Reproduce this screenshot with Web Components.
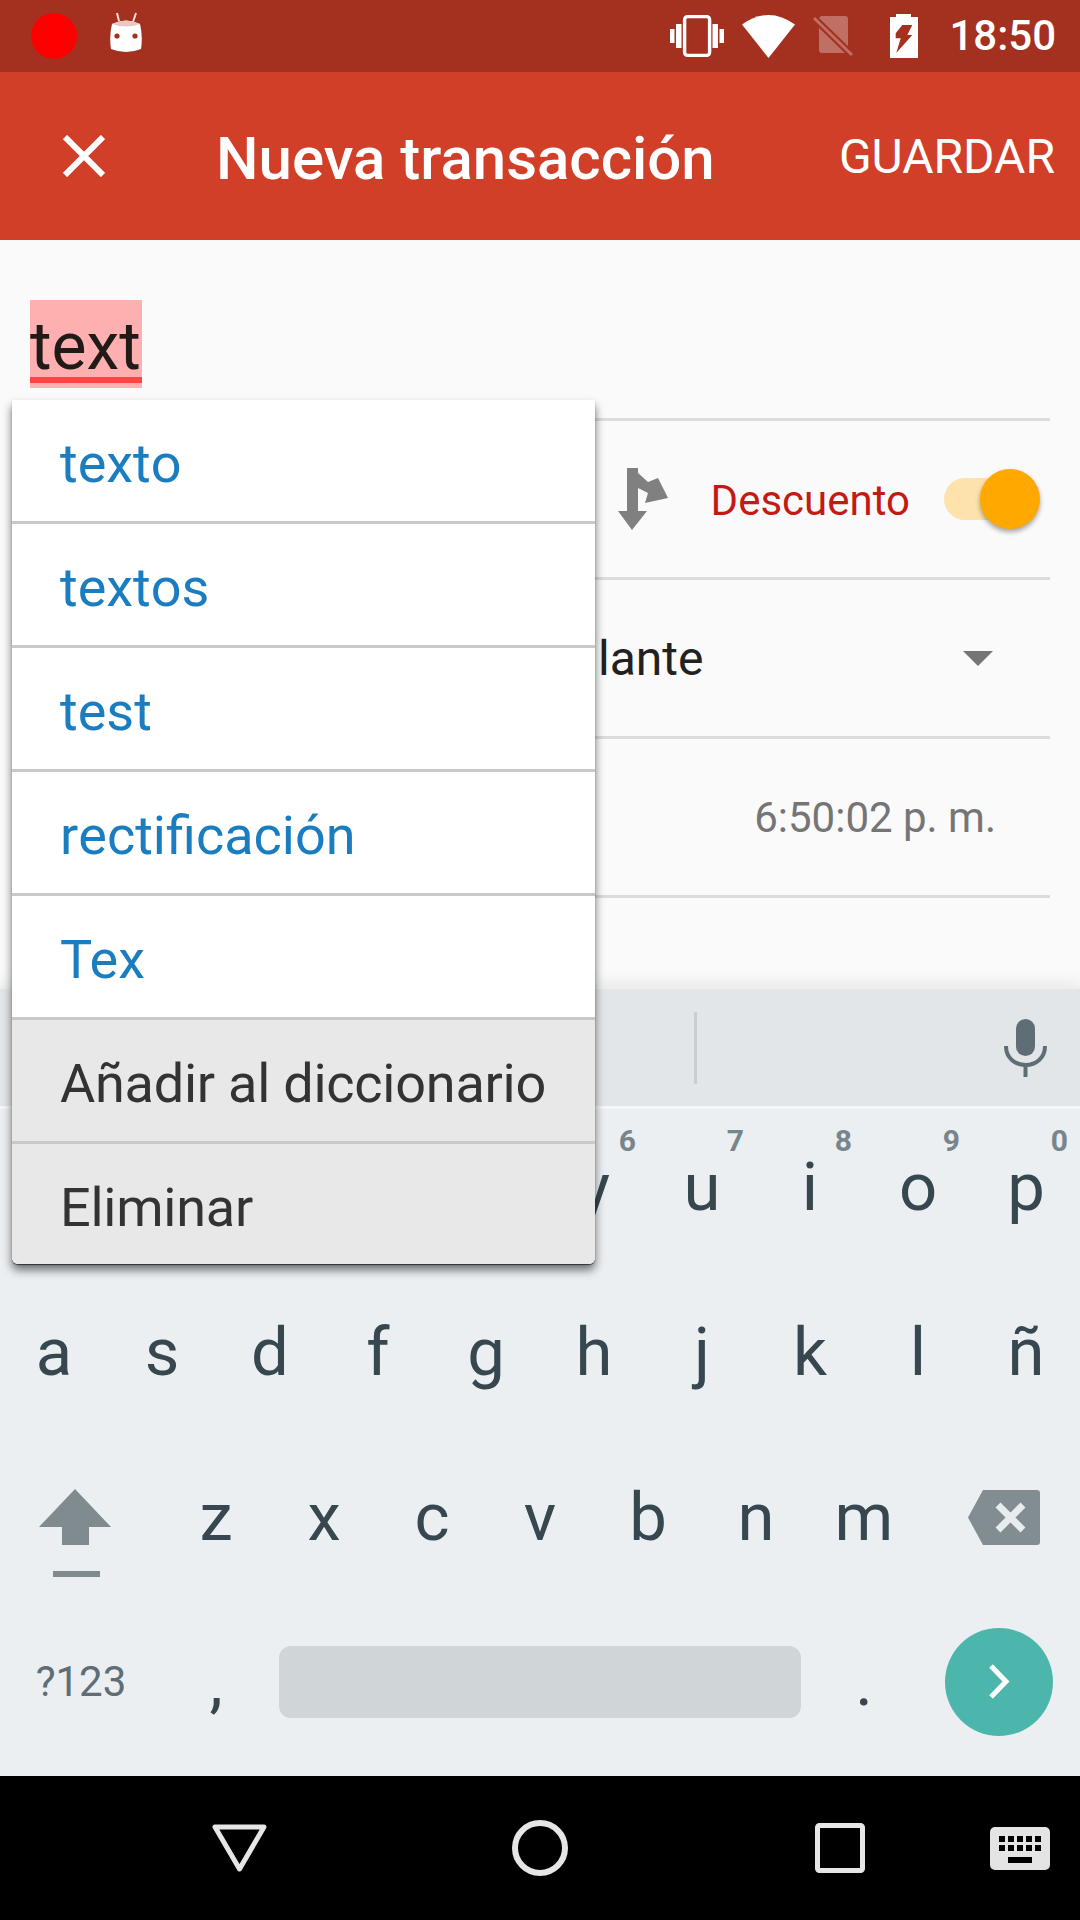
<!DOCTYPE html>
<html lang="es">
<head>
<meta charset="utf-8">
<title>Nueva transacción</title>
<style>
  html, body { margin: 0; padding: 0; background: #fafafa; }
  body { font-family: Roboto, "Liberation Sans", sans-serif; }
</style>
</head>
<body>
<app-screen>
  <status-bar></status-bar>
  <app-bar title="Nueva transacción" action="GUARDAR"></app-bar>
  <transaction-form></transaction-form>
  <spell-popup></spell-popup>
  <key-board></key-board>
  <nav-bar></nav-bar>
</app-screen>

<script>
(function () {
    function define(name, html) {
        customElements.define(name, class extends HTMLElement {
            constructor() {
                super();
                this.attachShadow({mode: "open"}).innerHTML = html;
            }
        });
    }

    define('app-screen', `
    <style>
      :host {
        display: flex;
        flex-direction: column;
        position: relative;
        width: 1080px;
        height: 1920px;
        overflow: hidden;
        background: #fafafa;
      }
    </style>
    <slot></slot>`);

    define('status-bar', `
    <style>
      :host {
        display: flex;
        align-items: center;
        flex: 0 0 72px;
        box-sizing: border-box;
        padding: 0 24px 0 31px;
        background: #a43120;
        color: #fff;
      }
      .dot { width: 46px; height: 46px; border-radius: 50%; background: #f00; margin-right: 32px; }
      .spacer { flex: 1; }
      svg { display: block; }
      .clock { font-size: 42px; font-weight: 500; margin-left: 31px; line-height: 72px; }
    </style>
    <div class="dot"></div>
    <svg width="34" height="41" viewBox="0 0 34 41" style="margin-top:-7px">
      <path d="M8 1l2 8M27 1l-3 9" stroke="#f4dcd8" stroke-width="2" fill="none"/>
      <path d="M3 12Q17 5 31 12Q34 24 32 37Q17 43 2 37Q0 24 3 12Z" fill="#fff"/>
      <path d="M3 12Q17 5 31 12Q17 17 3 12Z" fill="#e8c8c4"/>
      <circle cx="8" cy="24" r="2.6" fill="#a43120"/>
      <circle cx="26" cy="24" r="2.6" fill="#a43120"/>
    </svg>
    <div class="spacer"></div>
    <svg width="54" height="42" viewBox="0 0 54 42" style="margin-right:18px">
      <rect x="14.6" y="1.6" width="25" height="38.8" rx="3" fill="none" stroke="#fff" stroke-width="3.4"/>
      <path d="M0 14h4.5v14H0zM6 9h5.5v24H6zM42.500 9H48v24h-5.500zM49.500 14H54v14h-4.500z" fill="#fff"/>
    </svg>
    <svg width="53" height="43" viewBox="0 0 53 43" style="margin-right:18px">
      <path d="M26.500 43L0 9.500Q26.500 -9.500 53 9.500Z" fill="#fff"/>
    </svg>
    <svg width="40" height="41" viewBox="0 0 40 41" style="margin-right:36px">
      <path d="M8 0H32Q35 0 35 3V34Q35 37 32 37H9Q6 37 6 34V2Z" fill="#fff" fill-opacity=".3"/>
      <path d="M1 2L39 39" stroke="#a43120" stroke-width="7"/>
      <path d="M1 2L39 39" stroke="#fff" stroke-opacity=".3" stroke-width="3"/>
    </svg>
    <svg width="29" height="44" viewBox="0 0 29 44">
      <path d="M7 0H22V3H29V44H1V3H7Z" fill="#fff"/>
      <path d="M6.700 19.300L13.300 11H23.300L18.300 21H23.300L7.300 39L11.700 24.300H6.700Z" fill="#a43120"/>
    </svg>
    <span class="clock">18:50</span>`);

    customElements.define('app-bar', class extends HTMLElement {
        constructor() {
            super();
            this.attachShadow({mode: "open"}).innerHTML = `
            <style>
              :host {
                display: flex;
                align-items: center;
                flex: 0 0 168px;
                box-sizing: border-box;
                padding: 0 25px 0 63px;
                background: #d13f29;
                color: #fff;
              }
              svg { display: block; flex: none; margin-right: 111px; }
              .title { flex: 1; font-size: 60px; font-weight: 500; white-space: nowrap; padding-top: 4px; }
              .action { font-size: 48px; white-space: nowrap; }
            </style>
            <svg width="42" height="42" viewBox="0 0 42 42">
              <path d="M2 2L40 40M40 2L2 40" stroke="#fff" stroke-width="6"/>
            </svg>
            <span class="title"></span>
            <span class="action"></span>`;
            this.shadowRoot.querySelector('.title').textContent = this.getAttribute('title');
            this.shadowRoot.querySelector('.action').textContent = this.getAttribute('action');
        }
    });

    define('form-row', `
    <style>
      :host {
        display: flex;
        align-items: center;
        box-sizing: border-box;
        height: 159px;
        margin: 0 30px;
        border-bottom: 3px solid #dcdcdc;
      }
    </style>
    <slot></slot>`);

    define('transaction-form', `
    <style>
      :host {
        display: block;
        flex: 0 0 746px;
        color: #212121;
      }
      form-row.first { height: 181px; align-items: flex-start; padding-top: 60px; }
      .misspelled {
        display: inline-block;
        box-sizing: border-box;
        height: 88px;
        padding: 6px 1px 0 0;
        font-size: 66px;
        line-height: 82px;
        font-kerning: none;
        color: #201a19;
        background:
          linear-gradient(#ff4444, #ff4444) 0 77px / 100% 6px no-repeat,
          #feb0b0;
      }
      .transfer { justify-content: flex-end; padding-right: 10px; }
      .transfer svg.icon { margin-right: 43px; }
      .label { font-size: 42px; color: #c51a14; margin-right: 34px; padding-top: 2px; }
      .switch { width: 96px; height: 60px; flex: none; }
      .type { padding-left: 568px; padding-right: 57px; justify-content: space-between; font-size: 48px; }
      .time { justify-content: flex-end; padding-right: 54px; font-size: 42px; color: #757575; }
    </style>
    <form-row class="first"><span class="misspelled">text</span></form-row>
    <form-row class="transfer">
      <svg class="icon" width="50" height="62" viewBox="17 13 50 62">
        <path d="M26 13H37V18L47 27L57 23L67 43L44 48L47 38L37 33V56H46L31 75L17 56H26Z" fill="#808080"/>
      </svg>
      <span class="label">Descuento</span>
      <toggle-switch class="switch"></toggle-switch>
    </form-row>
    <form-row class="type">
      <span>lante</span>
      <svg width="30" height="15" viewBox="0 0 30 15"><path d="M0 0H30L15 15Z" fill="#757575"/></svg>
    </form-row>
    <form-row class="time"><span>6:50:02 p. m.</span></form-row>`);

    define('toggle-switch', `
    <style>
      :host { display: flex; align-items: center; position: relative; }
      .track { width: 90px; height: 42px; border-radius: 21px; background: #fde2ab; }
      .thumb {
        position: absolute;
        right: 0;
        top: 0;
        width: 60px;
        height: 60px;
        border-radius: 50%;
        background: #ffa800;
        box-shadow: 0 3px 5px rgba(0, 0, 0, .35);
      }
    </style>
    <div class="track"></div>
    <div class="thumb"></div>`);

    define('spell-popup', `
    <style>
      :host {
        display: block;
        position: absolute;
        z-index: 2;
        left: 12px;
        top: 400px;
        width: 583px;
        border-radius: 0 0 6px 6px;
        background: #fff;
        box-shadow: 0 1px 1px rgba(0, 0, 0, .6), 0 6px 10px rgba(0, 0, 0, .55);
        font-size: 54px;
      }
      .row {
        box-sizing: border-box;
        height: 124px;
        padding: 6px 0 0 48px;
        display: flex;
        align-items: center;
        border-bottom: 3px solid #c9c9c9;
        color: #1a7dc0;
        font-kerning: none;
      }
      .kerned { font-kerning: auto; }
      .action { background: #e8e8e8; color: #333; letter-spacing: -.24px; font-kerning: auto; }
      .action.last { height: 120px; border-bottom: 0; border-radius: 0 0 6px 6px; }
    </style>
    <div class="row">texto</div>
    <div class="row">textos</div>
    <div class="row">test</div>
    <div class="row">rectificación</div>
    <div class="row kerned">Tex</div>
    <div class="row action">Añadir al diccionario</div>
    <div class="row action last">Eliminar</div>`);

    customElements.define('kb-key', class extends HTMLElement {
        constructor() {
            super();
            this.attachShadow({mode: "open"}).innerHTML = `
            <style>
              :host {
                display: flex;
                align-items: center;
                justify-content: center;
                position: relative;
                flex: 0 0 var(--w, 108px);
                height: 165px;
                font-size: 67px;
                color: #37474f;
              }
              .hint {
                position: absolute;
                top: 19px;
                right: 12px;
                font-size: 30px;
                font-weight: 700;
                color: #78858c;
              }
            </style>
            <slot></slot>`;
            if (this.hasAttribute('hint')) {
                const hint = document.createElement('span');
                hint.className = 'hint';
                hint.textContent = this.getAttribute('hint');
                this.shadowRoot.appendChild(hint);
            }
        }
    });

    define('key-board', `
    <style>
      :host {
        display: block;
        position: relative;
        flex: 0 0 790px;
        box-sizing: border-box;
        background: #ebeff2;
        box-shadow: 0 -4px 14px rgba(0, 0, 0, .07);
      }
      .strip {
        display: flex;
        align-items: center;
        justify-content: space-between;
        box-sizing: border-box;
        height: 123px;
        margin-bottom: -5px;
        padding: 0 33px 0 694px;
        background: #e2e6e9;
        border-top: 3px solid #eceef0;
        border-bottom: 3px solid #f4f6f7;
        position: relative;
      }
      .strip i { display: block; width: 3px; height: 72px; background: #c8ced2; }
      .row { display: flex; }
      .wide { --w: 162px; }
      .sym { font-size: 42px; color: #5f6d75; }
      .space { --w: 540px; }
      .bar { width: 522px; height: 72px; border-radius: 12px; background: #d0d5d8; }
      .enter { width: 108px; height: 108px; border-radius: 50%; background: #4db6ac; display: flex; align-items: center; justify-content: center; }
      svg { display: block; }
      .gap { flex: 0 0 540px; }
    </style>
    <div class="strip">
      <i></i>
      <svg width="43" height="58" viewBox="0 0 43 58">
        <rect x="12" y="0" width="19" height="37" rx="9.500" fill="#5f6d75"/>
        <path d="M2 27C2 39 11 46 21.500 46S41 39 41 27" fill="none" stroke="#5f6d75" stroke-width="4"/>
        <rect x="19.500" y="45" width="4" height="13" fill="#5f6d75"/>
      </svg>
    </div>
    <div class="row">
      <div class="gap"></div>
      <kb-key hint="6">y</kb-key>
      <kb-key hint="7">u</kb-key>
      <kb-key hint="8">i</kb-key>
      <kb-key hint="9">o</kb-key>
      <kb-key hint="0">p</kb-key>
    </div>
    <div class="row">
      <kb-key>a</kb-key><kb-key>s</kb-key><kb-key>d</kb-key><kb-key>f</kb-key><kb-key>g</kb-key>
      <kb-key>h</kb-key><kb-key>j</kb-key><kb-key>k</kb-key><kb-key>l</kb-key><kb-key>ñ</kb-key>
    </div>
    <div class="row">
      <kb-key class="wide">
        <svg width="72" height="88" viewBox="0 0 72 88" style="margin:33px 12px 0 0">
          <path d="M36 0L72 38H50V56H23V38H0Z" fill="#808b8f"/>
          <rect x="14" y="82" width="47" height="6" fill="#808b8f"/>
        </svg>
      </kb-key>
      <kb-key>z</kb-key><kb-key>x</kb-key><kb-key>c</kb-key><kb-key>v</kb-key>
      <kb-key>b</kb-key><kb-key>n</kb-key><kb-key>m</kb-key>
      <kb-key class="wide">
        <svg width="72" height="55" viewBox="0 0 72 55" style="margin:2px 0 0 10px">
          <path d="M15 0H69Q72 0 72 3V52Q72 55 69 55H15L0 27.500Z" fill="#828d91"/>
          <path d="M30 15L55 40M55 15L30 40" stroke="#e8ecef" stroke-width="7"/>
        </svg>
      </kb-key>
    </div>
    <div class="row">
      <kb-key class="wide sym">?123</kb-key>
      <kb-key>,</kb-key>
      <kb-key class="space"><div class="bar"></div></kb-key>
      <kb-key>.</kb-key>
      <kb-key class="wide">
        <div class="enter">
          <svg width="22" height="35" viewBox="0 0 22 35"><path d="M3 2L18 17.500L3 33" fill="none" stroke="#fff" stroke-width="5"/></svg>
        </div>
      </kb-key>
    </div>`);

    define('nav-bar', `
    <style>
      :host {
        display: flex;
        align-items: center;
        flex: 0 0 144px;
        box-sizing: border-box;
        padding-left: 212px;
        background: #000;
        position: relative;
      }
      svg { display: block; flex: none; }
    </style>
    <svg width="55" height="48" viewBox="0 0 55 48" style="margin-right:245px">
      <path d="M3 3H52L27.500 45Z" fill="none" stroke="#e6e6e6" stroke-width="5" stroke-linejoin="round"/>
    </svg>
    <svg width="56" height="56" viewBox="0 0 56 56" style="margin-right:247px">
      <circle cx="28" cy="28" r="25" fill="none" stroke="#e6e6e6" stroke-width="6"/>
    </svg>
    <svg width="50" height="50" viewBox="0 0 50 50" style="margin-right:125px">
      <rect x="2.500" y="2.500" width="45" height="45" rx="2" fill="none" stroke="#e6e6e6" stroke-width="5"/>
    </svg>
    <svg width="60" height="43" viewBox="0 0 60 43">
      <rect width="60" height="43" rx="5" fill="#e4e4e4"/>
      <path d="M9 9h6v6H9zM18 9h6v6h-6zM27 9h6v6h-6zM36 9h6v6h-6zM45 9h6v6h-6zM9 18h6v6H9zM18 18h6v6h-6zM27 18h6v6h-6zM36 18h6v6h-6zM45 18h6v6h-6zM18 30h24v6H18z" fill="#000"/>
    </svg>`);
})();
</script>
</body>
</html>
